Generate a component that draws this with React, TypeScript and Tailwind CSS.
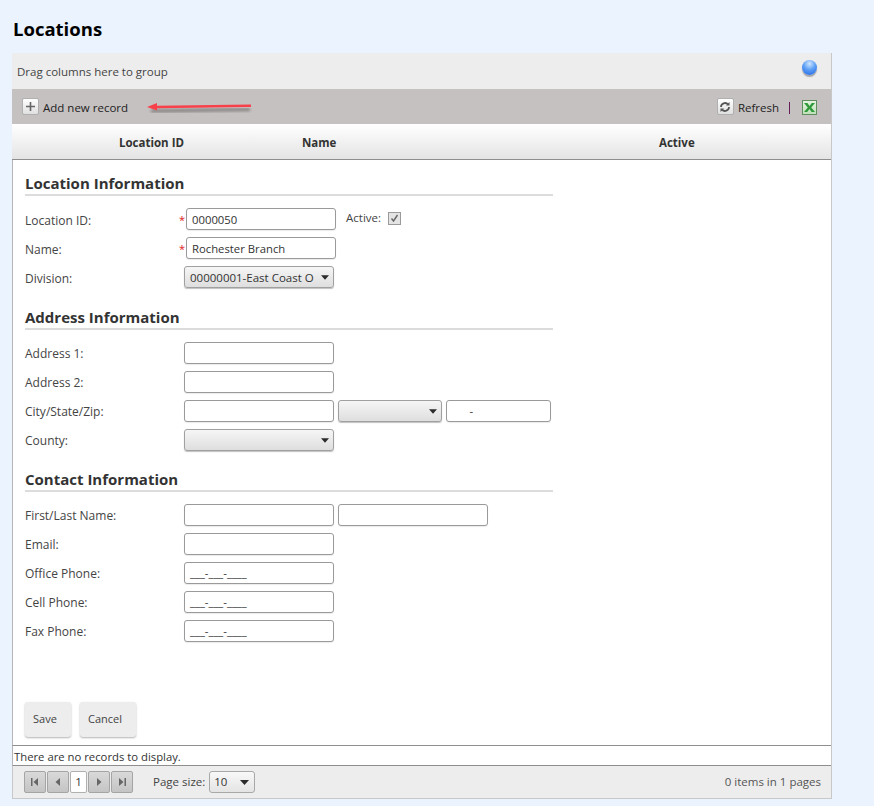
import React from 'react'

const FONT = "font-['Open_Sans','Noto_Sans',sans-serif]"

function TextBox({ value = '', width = 'w-[150px]', low }: { value?: string; width?: string; low?: boolean }) {
  return (
    <div className={`${width} ${low ? 'leading-[22px]' : 'leading-[20px]'} h-[22px] shrink-0 rounded-[3px] border border-[#9a9a9a] bg-white pl-[5px] text-[11.3px] text-[#333] whitespace-pre shadow-[0_1px_1px_rgba(0,0,0,0.08)]`}>
      {value}
    </div>
  )
}

function Select({ value = '', width = 'w-[150px]' }: { value?: string; width?: string }) {
  return (
    <div className={`${width} flex h-[22px] shrink-0 items-center justify-between rounded-[3px] border border-[#a0a0a0] bg-gradient-to-b from-[#f6f6f6] to-[#dedede] pl-[5px] pr-[4px] text-[11.5px] text-[#333] shadow-[0_1px_1px_rgba(0,0,0,0.25)]`}>
      <span className="whitespace-nowrap pt-[1px]">{value}</span>
      <svg width="8" height="5" viewBox="0 0 9 5"><path d="M0 0h9L4.5 5z" fill="#2b2b2b" /></svg>
    </div>
  )
}

function Row({ label, required, low, children }: { label: string; required?: boolean; low?: boolean; children: React.ReactNode }) {
  return (
    <div className="flex h-[22px] items-center">
      <div className={`${low ? 'pt-[4px]' : 'pt-[2px]'} w-[153px] shrink-0 text-[12px] text-[#444]`}>{label}</div>
      {required ? (
        <div className="w-[8px] shrink-0 pl-[1px] text-[11px] leading-none text-[#e02020]">*</div>
      ) : (
        <div className="w-[6px] shrink-0" />
      )}
      <div className="flex items-start gap-[4px]">{children}</div>
    </div>
  )
}

function Section({ title }: { title: string }) {
  return (
    <div className="w-[528px] border-b-2 border-[#dcdcdc] pb-[1px] text-[15px] font-bold leading-[19px] text-[#333]">
      {title}
    </div>
  )
}

function PagerBtn({ kind }: { kind: 'first' | 'prev' | 'next' | 'last' }) {
  return (
    <div className="flex h-[22px] w-[22px] items-center justify-center rounded-[2px] border border-[#a5a5a5] bg-gradient-to-b from-[#d9d9d9] to-[#c4c4c4]">
      <svg width="10" height="10" viewBox="0 0 10 10" fill="#666">
        {kind === 'first' && <><rect x="1" y="1" width="1.5" height="8" /><path d="M8 1v8L3.5 5z" /></>}
        {kind === 'prev' && <path d="M7 1v8L2.5 5z" />}
        {kind === 'next' && <path d="M3 1v8l4.5-4z" />}
        {kind === 'last' && <><rect x="7.5" y="1" width="1.5" height="8" /><path d="M2 1v8l4.5-4z" /></>}
      </svg>
    </div>
  )
}

export default function App() {
  return (
    <div className={`${FONT} h-[806px] w-[874px] overflow-hidden bg-[#ebf3fe] pl-[12px]`}>
      <h1 className="ml-[1px] h-[53px] pt-[16px] text-[18.5px] font-bold leading-[26px] text-black">Locations</h1>

      <div className="relative w-[820px] border-r border-[#c8c8c8]">
        {/* Group panel */}
        <div className="flex h-[36px] items-center justify-between bg-[#ededed] pl-[5px] pr-[14px] text-[11.5px] text-[#444]">
          <span className="pt-[2px]">Drag columns here to group</span>
          <div className="mb-[7px] h-[15px] w-[15px] rounded-full bg-[radial-gradient(circle_at_50%_25%,#cfe6ff_0%,#5d9ff5_45%,#3577ea_80%,#6aa5f0_100%)] shadow-[0_2px_1px_rgba(0,0,0,0.3)]" />
        </div>

        {/* Toolbar */}
        <div className="flex h-[35px] items-center justify-between bg-[#c5c1c0] pl-[10px] pr-[14px] text-[11.5px] text-[#222]">
          <div className="flex items-center gap-[4px]">
            <div className="flex h-[17px] w-[17px] items-center justify-center rounded-[2px] border border-[#b0b0b0] bg-gradient-to-b from-white to-[#e0e0e0]">
              <svg width="9" height="9" viewBox="0 0 9 9"><path d="M3.7 0h1.6v3.7H9v1.6H5.3V9H3.7V5.3H0V3.7h3.7z" fill="#666" /></svg>
            </div>
            <span className="mt-[3px]">Add new record</span>
          </div>
          <div className="flex items-center">
            <div className="flex h-[17px] w-[17px] items-center justify-center rounded-[2px] border border-[#b0b0b0] bg-gradient-to-b from-white to-[#e0e0e0]">
              <svg width="12" height="12" viewBox="0 0 12 12" fill="none" stroke="#555" strokeWidth="1.8">
                <path d="M2 6a4 4 0 0 1 7-2.6" />
                <path d="M10 6a4 4 0 0 1-7 2.6" />
                <path d="M10.5 1v3.6H6.9z" fill="#555" stroke="none" />
                <path d="M1.5 11V7.4h3.6z" fill="#555" stroke="none" />
              </svg>
            </div>
            <span className="ml-[4px] mt-[3px]">Refresh</span>
            <div className="ml-[10px] mt-[3px] h-[12px] w-px bg-[#6a1b5a]" />
            <div className="ml-[12px] mt-[2px] flex h-[15px] w-[15px] items-center justify-center border border-[#5f8f5f] bg-gradient-to-b from-[#e4f2df] to-[#bfe0b8]">
              <svg width="13" height="11" viewBox="0 0 13 11">
                <path d="M1 1h3.4L6.5 4 8.8 1H12L8.2 5.5 12 10H8.6L6.5 7 4.2 10H1l3.8-4.5z" fill="#2f9a3a" />
              </svg>
            </div>
          </div>
        </div>

        {/* Red annotation arrow */}
        <svg className="absolute left-[130px] top-[43px]" width="120" height="24" viewBox="0 0 120 24">
          <defs>
            <filter id="arrowBlur" x="-10%" y="-100%" width="120%" height="300%">
              <feGaussianBlur stdDeviation="1.4" />
            </filter>
          </defs>
          <path d="M9 15 L108 13.5" stroke="#000" strokeOpacity="0.35" strokeWidth="3" filter="url(#arrowBlur)" />
          <path d="M14 11 L109 9.7" stroke="#f8404a" strokeWidth="2.4" fill="none" />
          <path d="M5 11 L15 7 L15 14.5 z" fill="#f8404a" />
        </svg>

        {/* Column headers */}
        <div className="flex h-[36px] items-center border-b border-[#8e8e8e] bg-gradient-to-b from-white to-[#e4e4e4] pt-[2px] text-[11.5px] font-bold text-[#333]">
          <div className="w-[107px]" />
          <div className="w-[183px]">Location ID</div>
          <div className="w-[357px]">Name</div>
          <div>Active</div>
        </div>

        {/* Edit form */}
        <div className="h-[585px] border-l border-[#b5b5b5] bg-white pl-[12px] pt-[14px]">
          <Section title="Location Information" />
          <div className="mt-[12px] flex flex-col gap-[7px]">
            <Row label="Location ID:" required low>
              <TextBox value="0000050" low />
              <div className="ml-[6px] flex h-[20px] items-center gap-[7px] text-[11.5px] text-[#444]">
                Active:
                <div className="flex h-[13px] w-[13px] items-center justify-center border border-[#9a9a9a] bg-[#e4e4e4]">
                  <svg width="9" height="9" viewBox="0 0 9 9" fill="none" stroke="#666" strokeWidth="1.4"><path d="M1.5 4.5 3.5 7 7.5 1" /></svg>
                </div>
              </div>
            </Row>
            <Row label="Name:" required low>
              <TextBox value="Rochester Branch" low />
            </Row>
            <Row label="Division:" low>
              <Select value="00000001-East Coast O" />
            </Row>
          </div>

          <div className="mt-[20px]"><Section title="Address Information" /></div>
          <div className="mt-[12px] flex flex-col gap-[7px]">
            <Row label="Address 1:"><TextBox /></Row>
            <Row label="Address 2:"><TextBox /></Row>
            <Row label="City/State/Zip:">
              <TextBox />
              <Select width="w-[104px]" />
              <TextBox width="w-[105px]" value="      -" />
            </Row>
            <Row label="County:"><Select /></Row>
          </div>

          <div className="mt-[19px]"><Section title="Contact Information" /></div>
          <div className="mt-[12px] flex flex-col gap-[7px]">
            <Row label="First/Last Name:">
              <TextBox />
              <TextBox />
            </Row>
            <Row label="Email:"><TextBox /></Row>
            <Row label="Office Phone:"><TextBox value="___-___-____" /></Row>
            <Row label="Cell Phone:"><TextBox value="___-___-____" /></Row>
            <Row label="Fax Phone:"><TextBox value="___-___-____" /></Row>
          </div>

          <div className="mt-[60px] flex gap-[9px] text-[11px] text-[#444]">
            <div className="flex h-[35px] w-[46px] items-center rounded-[3px] bg-[#ededed] pl-[8px] shadow-[0_1px_2px_rgba(0,0,0,0.3)]">Save</div>
            <div className="flex h-[35px] w-[56px] items-center rounded-[3px] bg-[#ededed] pl-[8px] shadow-[0_1px_2px_rgba(0,0,0,0.3)]">Cancel</div>
          </div>
        </div>

        {/* Footer */}
        <div className="h-[20px] border-l border-t border-[#8e8e8e] border-l-[#b5b5b5] bg-white pl-[1px] text-[11.3px] leading-[21px] text-[#333]">
          There are no records to display.
        </div>
        <div className="flex h-[34px] items-center justify-between border-b border-l border-t border-[#c8c8c8] border-t-[#8e8e8e] bg-[#ededed] pl-[11px] pr-[10px] text-[11.5px] text-[#444]">
          <div className="flex items-center">
            <div className="flex items-center gap-px">
              <PagerBtn kind="first" />
              <PagerBtn kind="prev" />
              <div className="flex h-[22px] w-[17px] items-center justify-center rounded-[2px] border border-[#b0b0b0] bg-white text-[#333]">1</div>
              <PagerBtn kind="next" />
              <PagerBtn kind="last" />
            </div>
            <span className="ml-[20px]">Page size:</span>
            <div className="ml-[4px] flex h-[22px] w-[46px] items-center justify-between rounded-[3px] border border-[#a8a8a8] bg-gradient-to-b from-[#f8f8f8] to-[#e4e4e4] pl-[4px] pr-[5px] text-[#333]">
              <span>10</span>
              <svg width="9" height="5" viewBox="0 0 9 5"><path d="M0 0h9L4.5 5z" fill="#2b2b2b" /></svg>
            </div>
          </div>
          <span className="text-[#555]">0 items in 1 pages</span>
        </div>
      </div>
    </div>
  )
}
